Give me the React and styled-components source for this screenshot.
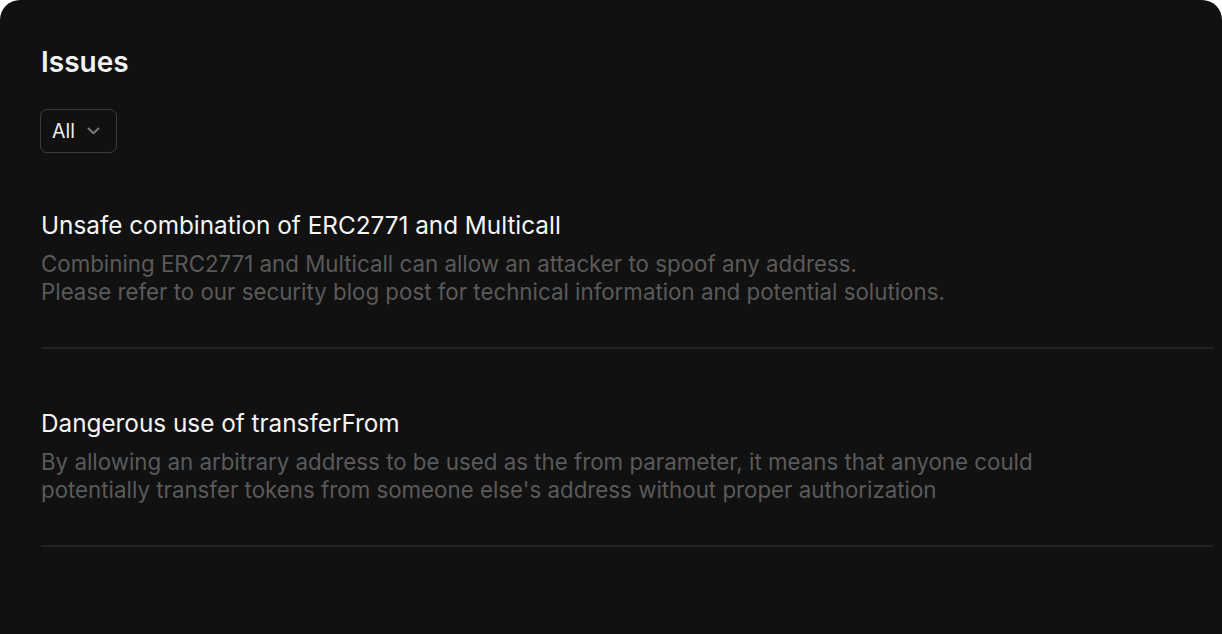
import React from 'react';
import styled, {createGlobalStyle} from 'styled-components';

const GlobalStyle = createGlobalStyle`
  html, body {
    margin: 0;
    padding: 0;
    background: #ffffff;
  }
  body {
    font-family: Inter, "Noto Sans", sans-serif;
  }
`

const Card = styled.section`
  box-sizing: border-box;
  width: 1222px;
  min-height: 660px;
  background: #111111;
  border-radius: 20px 20px 0 0;
  padding: 45px 9px 0 41px;
`

const Heading = styled.h2`
  margin: 0;
  font-size: 28px;
  font-weight: 600;
  line-height: 34px;
  color: #f2f2f2;
`

const Select = styled.button`
  box-sizing: border-box;
  display: flex;
  align-items: center;
  gap: 12px;
  height: 44px;
  margin: 30px 0 0 -1px;
  padding: 0 16px 0 11px;
  background: transparent;
  border: 1.5px solid #3c3c3c;
  border-radius: 7px;
  color: #ececec;
  font-family: inherit;
  font-size: 19.5px;
`

const IssueList = styled.div`
  display: flex;
  flex-direction: column;
  margin-top: 45px;
`

const Issue = styled.article`
  padding: 12px 0 41px;
  border-bottom: 2px solid #222222;
  & + & {
    padding-top: 58.5px;
    padding-bottom: 41.5px;
  }
`

const IssueTitle = styled.h3`
  margin: 0 0 10px;
  font-size: 24.3px;
  font-weight: 400;
  line-height: 30px;
  color: #f5f5f5;
`

const IssueText = styled.p`
  margin: 0;
  font-size: 22.3px;
  line-height: 28px;
  color: #5a5a5a;
`

const issues = [
    {
        id: 1,
        title: 'Unsafe combination of ERC2771 and Multicall',
        lines: [
            'Combining ERC2771 and Multicall can allow an attacker to spoof any address.',
            'Please refer to our security blog post for technical information and potential solutions.',
        ],
    },
    {
        id: 2,
        title: 'Dangerous use of transferFrom',
        lines: [
            'By allowing an arbitrary address to be used as the from parameter, it means that anyone could',
            "potentially transfer tokens from someone else's address without proper authorization",
        ],
    },
]

// small down chevron of the filter select
const Chevron = () => (
    <svg width="13" height="8" viewBox="0 0 13 8" fill="none" stroke="#787878" strokeWidth="2" strokeLinecap="round" strokeLinejoin="round">
        <path d="M1.5 1.5L6.5 6.3L11.5 1.5"/>
    </svg>
)

const App = () => {
    return (
        <>
            <GlobalStyle/>
            <Card>
                <Heading>Issues</Heading>
                <Select>
                    All
                    <Chevron/>
                </Select>
                <IssueList>
                    {
                        issues.map(issue => (
                            <Issue key={issue.id}>
                                <IssueTitle>{issue.title}</IssueTitle>
                                <IssueText>
                                    {issue.lines[0]}<br/>{issue.lines[1]}
                                </IssueText>
                            </Issue>
                        ))
                    }
                </IssueList>
            </Card>
        </>
    );
};

export default App;
